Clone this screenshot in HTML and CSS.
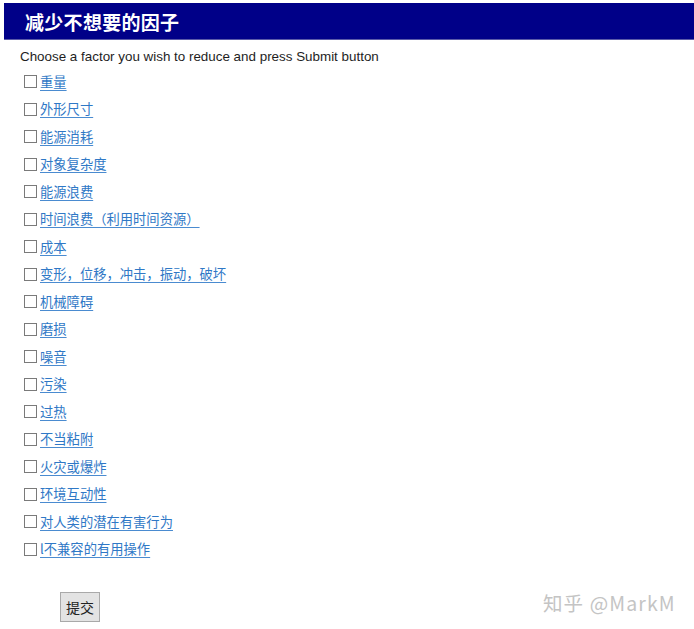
FILE: index.html
```html
<!DOCTYPE html>
<html>
<head>
<meta charset="utf-8">
<link rel="stylesheet" href="styles.css">
</head>
<body>
<div class="page">
  <div class="header"><h1 class="title">减少不想要的因子</h1></div>
  <p class="intro">Choose a factor you wish to reduce and press Submit button</p>
  <form class="factors">
    <label class="row"><input type="checkbox" class="box"><a class="link" href="#">重量</a></label>
    <label class="row"><input type="checkbox" class="box"><a class="link" href="#">外形尺寸</a></label>
    <label class="row"><input type="checkbox" class="box"><a class="link" href="#">能源消耗</a></label>
    <label class="row"><input type="checkbox" class="box"><a class="link" href="#">对象复杂度</a></label>
    <label class="row"><input type="checkbox" class="box"><a class="link" href="#">能源浪费</a></label>
    <label class="row"><input type="checkbox" class="box"><a class="link" href="#">时间浪费（利用时间资源）</a></label>
    <label class="row"><input type="checkbox" class="box"><a class="link" href="#">成本</a></label>
    <label class="row"><input type="checkbox" class="box"><a class="link" href="#">变形，位移，冲击，振动，破坏</a></label>
    <label class="row"><input type="checkbox" class="box"><a class="link" href="#">机械障碍</a></label>
    <label class="row"><input type="checkbox" class="box"><a class="link" href="#">磨损</a></label>
    <label class="row"><input type="checkbox" class="box"><a class="link" href="#">噪音</a></label>
    <label class="row"><input type="checkbox" class="box"><a class="link" href="#">污染</a></label>
    <label class="row"><input type="checkbox" class="box"><a class="link" href="#">过热</a></label>
    <label class="row"><input type="checkbox" class="box"><a class="link" href="#">不当粘附</a></label>
    <label class="row"><input type="checkbox" class="box"><a class="link" href="#">火灾或爆炸</a></label>
    <label class="row"><input type="checkbox" class="box"><a class="link" href="#">环境互动性</a></label>
    <label class="row"><input type="checkbox" class="box"><a class="link" href="#">对人类的潜在有害行为</a></label>
    <label class="row"><input type="checkbox" class="box"><a class="link" href="#">l不兼容的有用操作</a></label>
    <div class="actions"><button type="button" class="submit">提交</button></div>
  </form>
  <div class="watermark">知乎 @MarkM</div>
</div>
</body>
</html>
```
FILE: styles.css
```css
html, body {
  margin: 0;
  padding: 0;
  background: #ffffff;
}
body {
  font-family: "Liberation Sans", Arial, "Noto Sans CJK SC", sans-serif;
  color: #222;
}
.page {
  position: relative;
  padding: 3px 0 0 4px;
  height: 626px;
  overflow: hidden;
}
.header {
  background: #000088;
  height: 36px;
  display: flex;
  align-items: center;
  padding-left: 21px;
  border-bottom: 1px solid #5a5aa8;
}
.title {
  margin: 0;
  color: #ffffff;
  font-family: "Noto Sans CJK SC", sans-serif;
  font-weight: bold;
  font-size: 19px;
  line-height: 1;
  letter-spacing: 0.3px;
}
.intro {
  margin: 9px 0 0 16px;
  font-size: 13.4px;
  line-height: 16px;
  color: #1e1e1e;
}
.factors {
  display: flex;
  flex-direction: column;
  margin: 3px 0 0 20px;
}
.row {
  display: flex;
  align-items: center;
  height: 27.5px;
}
.box {
  appearance: none;
  -webkit-appearance: none;
  margin: 0 3px 0 0;
  width: 13px;
  height: 13px;
  border: 1px solid #7a7a7a;
  background: #fff;
  flex: none;
}
.link {
  font-family: "Noto Sans CJK SC", sans-serif;
  font-size: 13.3px;
  line-height: 18px;
  color: #2f78c6;
  text-decoration: underline;
  text-decoration-color: #4a8bd0;
  text-underline-offset: 3px;
}
.actions {
  margin: 29px 0 0 36px;
}
.submit {
  width: 40px;
  height: 30px;
  padding: 0;
  background: #e3e3e3;
  border: 1px solid #a9a9a9;
  border-radius: 0;
  font-family: "Noto Sans CJK SC", sans-serif;
  font-size: 14px;
  color: #222;
}
.watermark {
  position: absolute;
  left: 543px;
  top: 588px;
  font-family: "Noto Sans CJK SC", sans-serif;
  font-size: 19.5px;
  color: #c4c4c4;
  letter-spacing: 1.1px;
}
```
